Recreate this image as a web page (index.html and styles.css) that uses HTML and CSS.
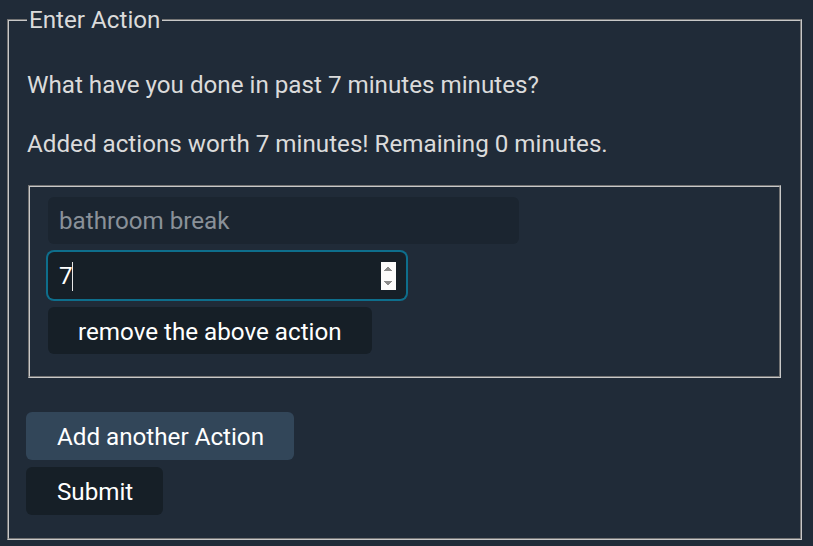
FILE: index.html
```html
<!DOCTYPE html>
<html>
<head>
<meta charset="utf-8">
<link rel="stylesheet" href="styles.css">
</head>
<body>
<form class="page">
  <fieldset class="outer">
    <legend class="legend">Enter Action</legend>
    <p class="line first">What have you done in past 7 minutes minutes?</p>
    <p class="line second">Added actions worth 7 minutes! Remaining 0 minutes.</p>
    <fieldset class="inner">
      <input class="field text-field" type="text" placeholder="bathroom break">
      <div class="num-wrap">
        <input class="field num-field" type="number" value="7">
        <span class="caret"></span>
      </div>
      <button type="button" class="btn dark">remove the above action</button>
    </fieldset>
    <button type="button" class="btn add">Add another Action</button>
    <button type="submit" class="btn dark submit">Submit</button>
  </fieldset>
</form>
</body>
</html>
```

FILE: styles.css
```css
html, body {
  margin: 0;
  padding: 0;
  background: #202b38;
  color: #dbdbdb;
  font-family: Roboto, "Liberation Sans", sans-serif;
  font-size: 24.2px;
}
.page {
  padding: 6px 11px 0 7px;
}
.outer {
  margin: 0;
  border: 2px groove #c8c8c8;
  padding: 0 18px 23px 18px;
}
.legend {
  padding: 0 2px;
  line-height: 28px;
  color: #dbdbdb;
}
.line {
  margin: 0;
  line-height: 28px;
}
.first { margin-top: 37px; }
.second { margin-top: 31px; }
.inner {
  margin: 27px 1px 0 1px;
  border: 2px groove #c8c8c8;
  padding: 10px 18px 22px 18px;
  display: flex;
  flex-direction: column;
  align-items: flex-start;
}
.field {
  font: inherit;
  color: #dbdbdb;
  border: none;
  border-radius: 6px;
  height: 47px;
  box-sizing: border-box;
  padding: 0 11px;
  outline: none;
}
.text-field {
  width: 471px;
  background: #1b2530;
  margin: 0 0 8px 0;
}
.text-field::placeholder { color: #8a9199; }
.num-wrap {
  position: relative;
  margin: 0 0 8px 0;
}
.num-field {
  display: block;
  width: 358px;
  background: #161f27;
  box-shadow: 0 0 0 2px #0e6e8c;
  color: #fff;
  padding-right: 10px;
}
.num-field::-webkit-inner-spin-button {
  opacity: 1;
  height: 28px;
}
.caret {
  position: absolute;
  left: 24px;
  top: 10px;
  width: 1px;
  height: 29px;
  background: #e8e8e8;
}
.btn {
  font: inherit;
  color: #fff;
  border: none;
  border-radius: 6px;
  height: 47px;
  padding: 2px 30px 0 30px;
  cursor: pointer;
  display: block;
}
.dark { background: #161f27; }
.add {
  background: #324659;
  margin: 34px 0 0 -1px;
  height: 48px;
  padding: 2px 30px 0 31px;
}
.submit {
  margin: 7px 0 0 -1px;
  height: 48px;
  padding: 2px 30px 0 31px;
}
```
